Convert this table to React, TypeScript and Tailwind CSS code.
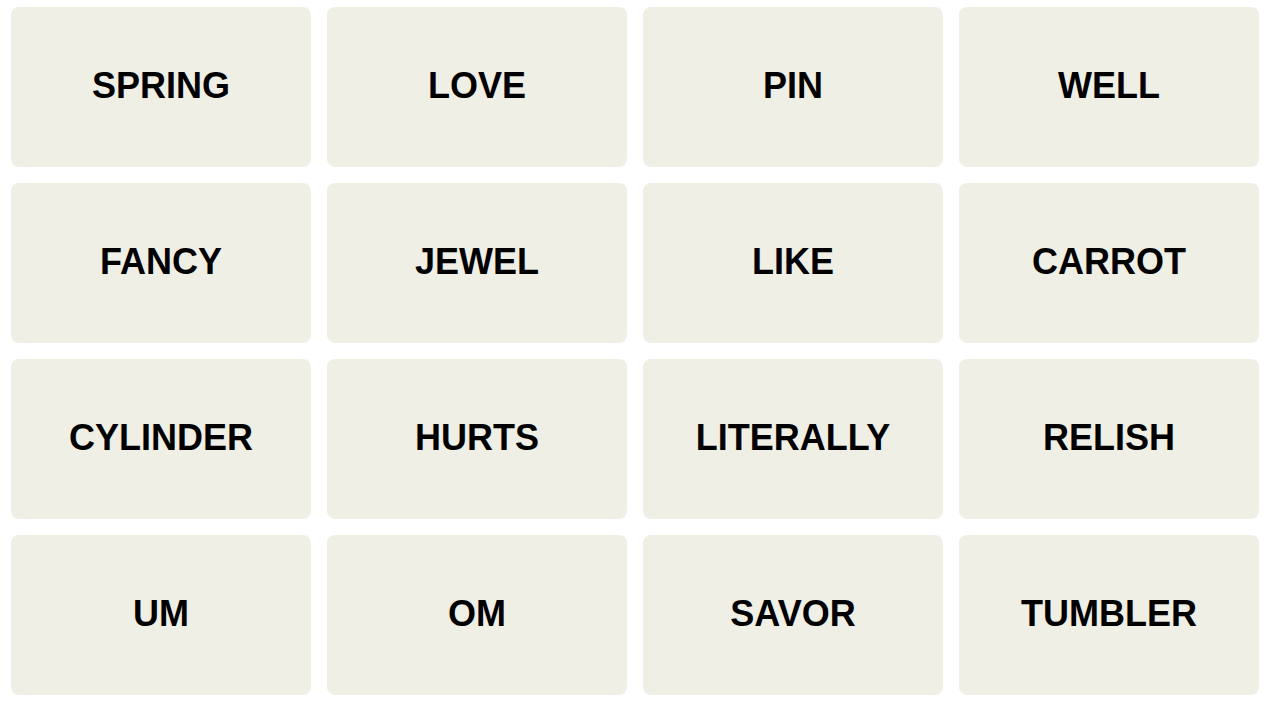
const words = [
  'SPRING', 'LOVE', 'PIN', 'WELL',
  'FANCY', 'JEWEL', 'LIKE', 'CARROT',
  'CYLINDER', 'HURTS', 'LITERALLY', 'RELISH',
  'UM', 'OM', 'SAVOR', 'TUMBLER',
];

export default function App() {
  return (
    <div className="min-h-screen bg-white pl-[11px] pt-[7px]">
      <div className="grid w-[1248px] grid-cols-4 gap-4">
        {words.map((word) => (
          <button
            key={word}
            className="flex h-[160px] items-center justify-center rounded-lg bg-[#efefe6] pb-[2px] font-['Liberation_Sans',Arial,sans-serif] text-[36px] font-bold text-black"
          >
            {word}
          </button>
        ))}
      </div>
    </div>
  );
}
